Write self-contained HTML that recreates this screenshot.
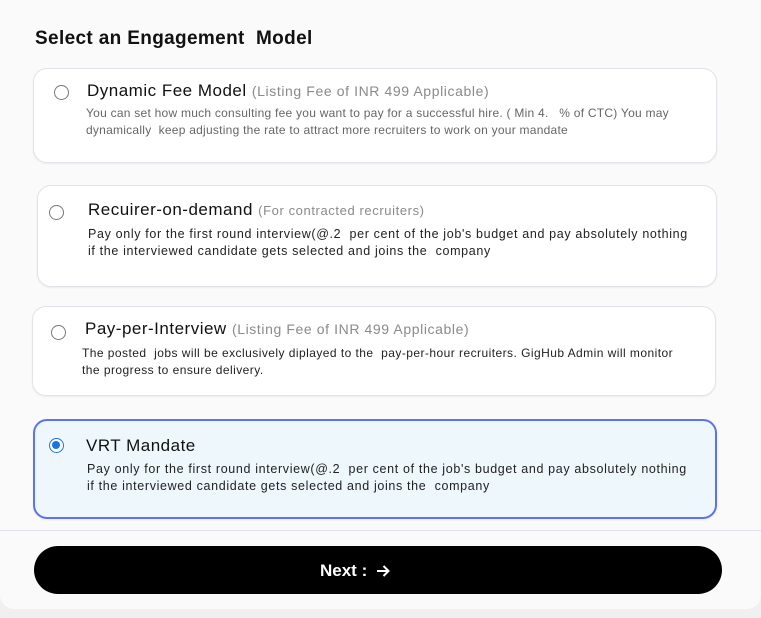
<!DOCTYPE html>
<html><head><style>
*{margin:0;padding:0;box-sizing:border-box}
body{width:761px;height:618px;background:#f0f0f0;font-family:"Liberation Sans",sans-serif;position:relative;overflow:hidden}
.panel{position:absolute;left:0;top:0;width:761px;height:609px;background:#fafafa;border-radius:0 0 14px 14px}
.t{position:absolute;white-space:nowrap}
.card{position:absolute;background:#fff;border:1px solid #e2e2e8;border-radius:14px;box-shadow:0 1px 2px rgba(0,0,0,.06)}
.radio{position:absolute;width:15px;height:15px;border:1.5px solid #777;border-radius:50%;background:#fff}
.h{font-size:17px;color:#111;letter-spacing:0.5px}
.h span{font-size:14px;color:#8a8a8a;letter-spacing:0.6px}
.d{font-size:12px;line-height:17px}
</style></head><body>
<div class="panel"></div>
<div class="t" style="left:35px;top:28px;font-size:19px;font-weight:bold;color:#111;letter-spacing:0.35px">Select an Engagement&nbsp; Model</div>

<div class="card" style="left:33px;top:68px;width:684px;height:95px"></div>
<div class="radio" style="left:54px;top:85px"></div>
<div class="t h" style="left:87px;top:81px">Dynamic Fee Model <span>(Listing Fee of INR 499 Applicable)</span></div>
<div class="t d" style="left:86px;top:105px;color:#666;letter-spacing:0.25px">You can set how much consulting fee you want to pay for a successful hire. ( Min 4.&nbsp;&nbsp; % of CTC) You may<br>dynamically&nbsp; keep adjusting the rate to attract more recruiters to work on your mandate</div>

<div class="card" style="left:37px;top:185px;width:680px;height:102px"></div>
<div class="radio" style="left:49px;top:205px"></div>
<div class="t h" style="left:88px;top:200px">Recuirer-on-demand <span style="font-size:13px">(For contracted recruiters)</span></div>
<div class="t d" style="left:88px;top:226px;color:#222;font-size:12.5px;letter-spacing:0.65px">Pay only for the first round interview(@.2&nbsp; per cent of the job's budget and pay absolutely nothing<br>if the interviewed candidate gets selected and joins the&nbsp; company</div>

<div class="card" style="left:32px;top:306px;width:684px;height:90px"></div>
<div class="radio" style="left:51px;top:325px"></div>
<div class="t h" style="left:85px;top:319px">Pay-per-Interview <span>(Listing Fee of INR 499 Applicable)</span></div>
<div class="t d" style="left:82px;top:345px;color:#222;letter-spacing:0.45px">The posted&nbsp; jobs will be exclusively diplayed to the&nbsp; pay-per-hour recruiters. GigHub Admin will monitor<br>the progress to&nbsp;ensure delivery.</div>

<div class="card" style="left:33px;top:419px;width:684px;height:100px;background:#eef7fb;border:2px solid #5f72ee"></div>
<div style="position:absolute;left:49px;top:438px;width:15px;height:15px;border-radius:50%;border:1.5px solid #1a73e8;background:#fff"><div style="position:absolute;left:2px;top:2px;width:8px;height:8px;border-radius:50%;background:#1a73e8"></div></div>
<div class="t h" style="left:86px;top:436px">VRT Mandate</div>
<div class="t d" style="left:87px;top:461px;color:#222;font-size:12.5px;letter-spacing:0.65px">Pay only for the first round interview(@.2&nbsp; per cent of the job's budget and pay absolutely nothing<br>if the interviewed candidate gets selected and joins the&nbsp; company</div>

<div style="position:absolute;left:0;top:530px;width:761px;height:1px;background:#e2e2ea"></div>
<div style="position:absolute;left:34px;top:546px;width:688px;height:48px;background:#000;border-radius:24px"></div>
<div class="t" style="left:320px;top:561px;font-size:17px;font-weight:bold;color:#fff">Next :</div>
<svg style="position:absolute;left:375px;top:563px" width="16" height="16" viewBox="0 0 16 16"><path d="M2 8H13M8.5 3L13.5 8L8.5 13" stroke="#fff" stroke-width="2" fill="none"/></svg>
</body></html>
